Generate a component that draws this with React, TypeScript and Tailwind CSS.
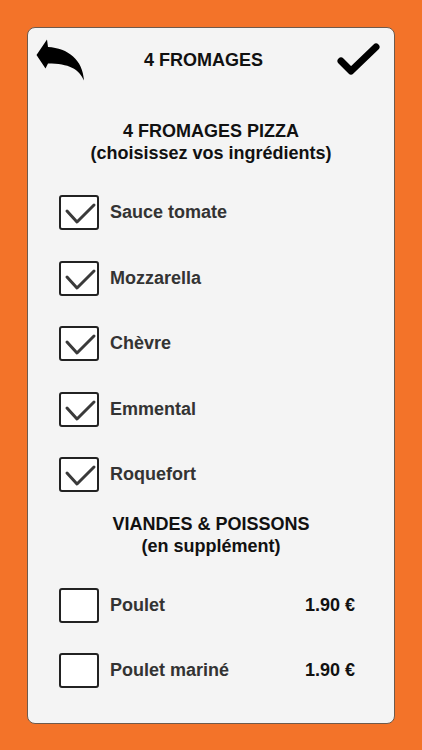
const font = { fontFamily: '"Liberation Sans", Arial, sans-serif' }

const cheeses = ['Sauce tomate', 'Mozzarella', 'Chèvre', 'Emmental', 'Roquefort']
const extras = [
  { name: 'Poulet', price: '1.90 €' },
  { name: 'Poulet mariné', price: '1.90 €' },
]

export default function App() {
  return (
    <div className="h-[750px] w-full bg-[#f37329] p-[27px] pb-[26px]" style={font}>
      <div className="flex h-full flex-col rounded-[8px] border-[1.5px] border-[#6e5a4c] bg-[#f4f4f4]">
        {/* header */}
        <div className="flex h-[66px] items-start pl-[8px] pr-[13px]">
          <div className="mt-[11px]">
            <BackIcon />
          </div>
          <div className="ml-[58px] mt-[22px] text-[18px] font-bold leading-[21px] text-[#111]">4 FROMAGES</div>
          <div className="flex-1" />
          <div className="mt-[14px]">
            <CheckIcon />
          </div>
        </div>

        <SectionTitle top="4 FROMAGES PIZZA" sub="(choisissez vos ingrédients)" className="mt-[26px]" />

        <div className="mt-[16px] flex flex-col pl-[31px] pr-[39px]">
          {cheeses.map((c) => (
            <Row key={c} label={c} checked />
          ))}
        </div>

        <SectionTitle top="VIANDES & POISSONS" sub="(en supplément)" className="mt-[5px]" />

        <div className="mt-[16px] flex flex-col pl-[31px] pr-[39px]">
          {extras.map((e) => (
            <Row key={e.name} label={e.name} price={e.price} />
          ))}
        </div>
      </div>
    </div>
  )
}

function SectionTitle({ top, sub, className }: { top: string; sub: string; className?: string }) {
  return (
    <div className={`text-center text-[18px] font-bold leading-[22px] text-[#111] ${className ?? ''}`}>
      <div>{top}</div>
      <div>{sub}</div>
    </div>
  )
}

function Row({ label, checked, price }: { label: string; checked?: boolean; price?: string }) {
  return (
    <div className="flex h-[65.5px] items-center">
      <div className="flex h-[35px] w-[40px] shrink-0 items-center justify-center rounded-[3px] border-2 border-[#222] bg-white">
        {checked && (
          <svg width="36" height="31" viewBox="0 0 36 31" fill="none">
            <polyline
              points="6,14 16,25 33,8"
              stroke="#3a3a3a"
              strokeWidth="3"
              strokeLinecap="round"
              strokeLinejoin="round"
            />
          </svg>
        )}
      </div>
      <div className="ml-[11px] flex-1 text-[18px] font-bold text-[#333]">{label}</div>
      {price && <div className="text-[18px] font-bold text-[#111]">{price}</div>}
    </div>
  )
}

function BackIcon() {
  return (
    <svg width="50" height="42" viewBox="0 0 50 42" className="block">
      <path
        d="M0.5 16 L11 0.5 L12 8 C32 9 47 21 48 41.5 C43 30 33 24.5 12 24.5 L9.5 29.5 Z"
        fill="#000"
      />
    </svg>
  )
}

function CheckIcon() {
  return (
    <svg width="44" height="36" viewBox="0 0 44 36" fill="none" className="block">
      <polyline
        points="4,19 14,29 39,5"
        stroke="#000"
        strokeWidth="7"
        strokeLinecap="round"
        strokeLinejoin="round"
      />
    </svg>
  )
}
